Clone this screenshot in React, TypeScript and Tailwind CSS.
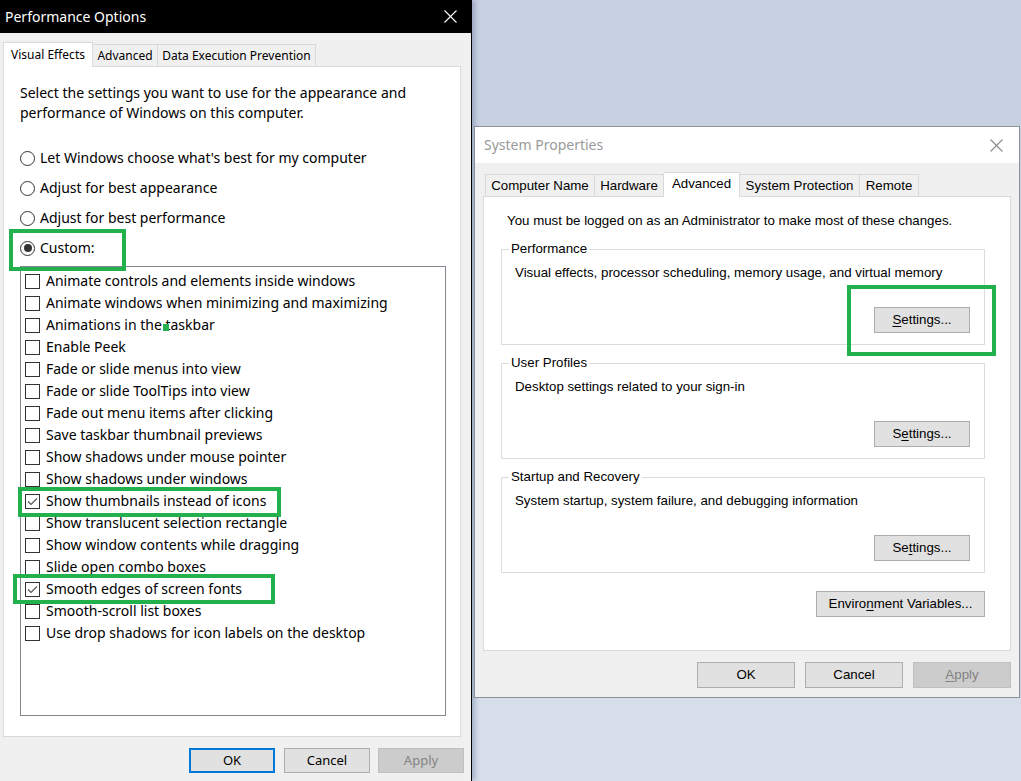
import React from "react";

const items: [string, boolean][] = [
  ["Animate controls and elements inside windows", false],
  ["Animate windows when minimizing and maximizing", false],
  ["Animations in the taskbar", false],
  ["Enable Peek", false],
  ["Fade or slide menus into view", false],
  ["Fade or slide ToolTips into view", false],
  ["Fade out menu items after clicking", false],
  ["Save taskbar thumbnail previews", false],
  ["Show shadows under mouse pointer", false],
  ["Show shadows under windows", false],
  ["Show thumbnails instead of icons", true],
  ["Show translucent selection rectangle", false],
  ["Show window contents while dragging", false],
  ["Slide open combo boxes", false],
  ["Smooth edges of screen fonts", true],
  ["Smooth-scroll list boxes", false],
  ["Use drop shadows for icon labels on the desktop", false],
];

const radios = [
  ["Let Windows choose what's best for my computer", false],
  ["Adjust for best appearance", false],
  ["Adjust for best performance", false],
  ["Custom:", true],
] as const;

function CloseX({ color }: { color: string }) {
  return (
    <svg width="13" height="13" viewBox="0 0 13 13">
      <line x1="0.5" y1="0.5" x2="12.5" y2="12.5" stroke={color} strokeWidth="1.1" />
      <line x1="12.5" y1="0.5" x2="0.5" y2="12.5" stroke={color} strokeWidth="1.1" />
    </svg>
  );
}

function Radio({ on }: { on: boolean }) {
  return (
    <div className="w-[15px] h-[15px] rounded-full border border-[#333333] bg-white flex items-center justify-center shrink-0">
      {on && <div className="w-[8px] h-[8px] rounded-full bg-[#333333]" />}
    </div>
  );
}

function Check({ on }: { on: boolean }) {
  return (
    <div className="w-[15px] h-[15px] border border-[#333333] bg-white shrink-0 flex items-center justify-center">
      {on && (
        <svg width="13" height="13" viewBox="0 0 13 13">
          <polyline points="2,6.5 5,9.5 11,3.5" fill="none" stroke="#555555" strokeWidth="1.2" />
        </svg>
      )}
    </div>
  );
}

function Group({
  title,
  desc,
  u,
}: {
  title: string;
  desc: string;
  u: number;
}) {
  const label = "Settings...";
  return (
    <fieldset className="ml-[17px] w-[484px] border border-[#dcdcdc] pb-[11px]">
      <legend className="ml-[7px] px-[2px] leading-[16px]">{title}</legend>
      <div className="pl-[13px] mt-[8px] leading-[16px]">{desc}</div>
      <div className="flex justify-end pr-[14px] mt-[26px]">
        <button className="w-[96px] h-[26px] bg-[#e1e1e1] border border-[#adadad] flex items-center justify-center">
          <span>
            {label.slice(0, u)}
            <span className="underline underline-offset-2">{label[u]}</span>
            {label.slice(u + 1)}
          </span>
        </button>
      </div>
    </fieldset>
  );
}

export default function App() {
  return (
    <div className="relative w-[1021px] h-[781px] overflow-hidden bg-[linear-gradient(to_bottom,#c8d1e1_0px,#c8d1e1_698px,#d5deea_698px,#d6dfeb_781px)]">
      {/* Left window: Performance Options */}
      <div className="absolute left-0 top-0 w-[472px] h-[781px] bg-[#f0f0f0] border-r border-black flex flex-col shadow-[3px_0_5px_rgba(70,90,130,0.35)] font-['Noto_Sans','DejaVu_Sans',sans-serif] text-black">
        <div className="h-[33px] bg-black flex items-center justify-between pl-[5px] pr-[14px] text-white text-[14px]">
          <span className="leading-[20px]">Performance Options</span>
          <CloseX color="#ffffff" />
        </div>
        <div className="pl-[3px] pt-[9px]">
          <div className="flex items-end h-[24px] text-[12px]">
            <div className="w-[90px] h-[25px] -mb-px bg-white border border-b-0 border-[#d9d9d9] relative z-10 flex items-center justify-center">
              Visual Effects
            </div>
            <div className="w-[65px] h-[22px] border border-l-0 border-b-0 border-[#d9d9d9] flex items-center justify-center">
              Advanced
            </div>
            <div className="w-[158px] h-[22px] border border-l-0 border-b-0 border-[#d9d9d9] flex items-center justify-center">
              Data Execution Prevention
            </div>
          </div>
          <div className="w-[458px] h-[671px] bg-white border border-[#d9d9d9] pl-[16px] pt-[16px] text-[14px]">
            <p className="leading-[20px]">
              Select the settings you want to use for the appearance and
              <br />
              performance of Windows on this computer.
            </p>
            <div className="mt-[20px] flex flex-col">
              {radios.map(([t, on]) => (
                <div key={t} className="h-[30px] flex items-center gap-[5px]">
                  <Radio on={on} />
                  <span className="leading-[20px]">{t}</span>
                </div>
              ))}
            </div>
            <div className="mt-[3px] w-[426px] h-[450px] border border-[#828790] pt-[3px] pl-[4px]">
              {items.map(([t, on]) => (
                <div key={t} className="h-[22px] flex items-center gap-[6px]">
                  <Check on={on} />
                  <span className="leading-[20px]">{t}</span>
                </div>
              ))}
            </div>
          </div>
        </div>
        <div className="mt-[11px] flex justify-end pr-[7px] gap-[8px] text-[13px]">
          <button className="w-[86px] h-[25px] bg-[#e1e1e1] border-2 border-[#0078d7] flex items-center justify-center">
            OK
          </button>
          <button className="ml-[1px] w-[86px] h-[25px] bg-[#e1e1e1] border border-[#adadad] flex items-center justify-center">
            Cancel
          </button>
          <button className="w-[86px] h-[25px] bg-[#cccccc] border border-[#bfbfbf] text-[#838383] flex items-center justify-center">
            Apply
          </button>
        </div>
      </div>

      {/* Right window: System Properties */}
      <div className="absolute left-[474px] top-[126px] w-[546px] h-[572px] bg-[#f0f0f0] border border-[#8c9099] flex flex-col font-['Liberation_Sans',Arial,sans-serif] text-[13.3px] text-black">
        <div className="h-[36px] bg-white flex items-center justify-between pl-[9px] pr-[16px] font-['Noto_Sans','DejaVu_Sans',sans-serif] text-[14px] text-[#9a9a9a]">
          <span className="leading-[20px]">System Properties</span>
          <CloseX color="#8a8a8a" />
        </div>
        <div className="pt-[9px]">
          <div className="flex items-end h-[24px] pl-[10px]">
            <div className="w-[110px] h-[22px] border border-b-0 border-[#d9d9d9] flex items-center justify-center">
              Computer Name
            </div>
            <div className="w-[69px] h-[22px] border border-l-0 border-b-0 border-[#d9d9d9] flex items-center justify-center">
              Hardware
            </div>
            <div className="w-[76px] h-[25px] -mb-px bg-white border border-l-0 border-b-0 border-[#d9d9d9] relative z-10 flex items-center justify-center pb-[2px]">
              Advanced
            </div>
            <div className="w-[120px] h-[22px] border border-l-0 border-b-0 border-[#d9d9d9] flex items-center justify-center">
              System Protection
            </div>
            <div className="w-[59px] h-[22px] border border-l-0 border-b-0 border-[#d9d9d9] flex items-center justify-center">
              Remote
            </div>
          </div>
          <div className="ml-[8px] w-[528px] h-[455px] bg-white border border-[#d9d9d9] flex flex-col">
            <div className="pl-[23px] pt-[16px] leading-[16px]">
              You must be logged on as an Administrator to make most of these changes.
            </div>
            <div className="mt-[12px] flex flex-col gap-[10px]">
              <Group
                title="Performance"
                desc="Visual effects, processor scheduling, memory usage, and virtual memory"
                u={0}
              />
              <Group title="User Profiles" desc="Desktop settings related to your sign-in" u={1} />
              <Group
                title="Startup and Recovery"
                desc="System startup, system failure, and debugging information"
                u={2}
              />
            </div>
            <div className="mt-[18px] flex justify-end pr-[25px]">
              <button className="w-[169px] h-[26px] bg-[#e1e1e1] border border-[#adadad] flex items-center justify-center">
                <span>
                  Enviro<span className="underline underline-offset-2">n</span>ment Variables...
                </span>
              </button>
            </div>
          </div>
          <div className="mt-[11px] flex justify-end pr-[8px] gap-[10px]">
            <button className="w-[98px] h-[26px] bg-[#e1e1e1] border border-[#adadad] flex items-center justify-center">
              OK
            </button>
            <button className="w-[98px] h-[26px] bg-[#e1e1e1] border border-[#adadad] flex items-center justify-center">
              Cancel
            </button>
            <button className="w-[98px] h-[26px] bg-[#cccccc] border border-[#bfbfbf] text-[#838383] flex items-center justify-center">
              <span>
                <span className="underline underline-offset-2">A</span>pply
              </span>
            </button>
          </div>
        </div>
      </div>

      {/* Green highlight annotations */}
      <div className="absolute left-[9px] top-[229px] w-[117px] h-[42px] border-[4px] border-[#22b14c]" />
      <div className="absolute left-[847px] top-[285px] w-[149px] h-[71px] border-[4px] border-[#22b14c]" />
      <div className="absolute left-[18px] top-[487px] w-[263px] h-[30px] border-[4px] border-[#22b14c]" />
      <div className="absolute left-[13px] top-[574px] w-[262px] h-[30px] border-[4px] border-[#22b14c]" />
      <div className="absolute left-[163px] top-[324px] w-[6px] h-[7px] bg-[#22b14c]" />
    </div>
  );
}
